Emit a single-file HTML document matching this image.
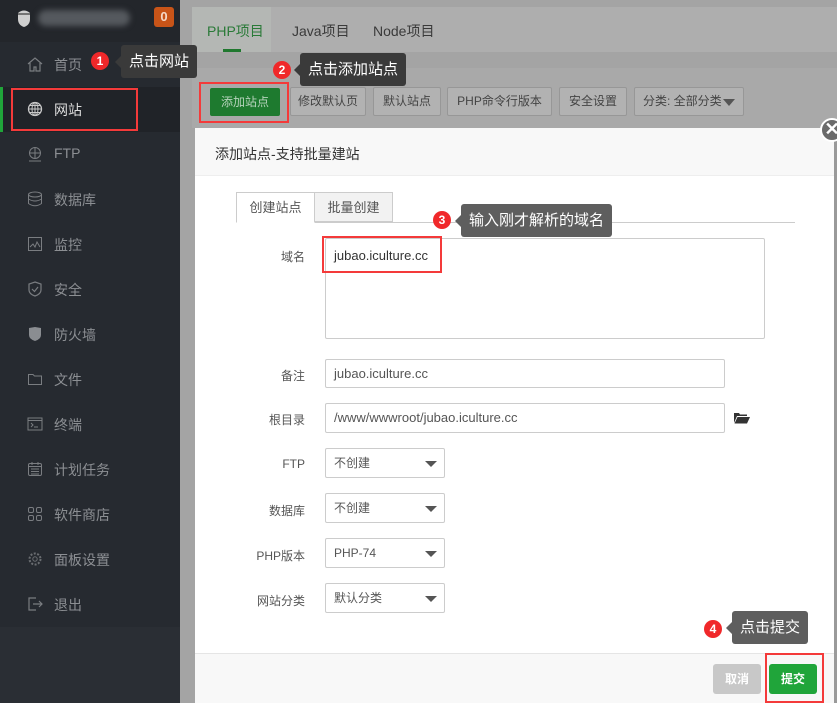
<!DOCTYPE html>
<html><head><meta charset="utf-8">
<style>
*{box-sizing:border-box;margin:0;padding:0}
body{width:837px;height:703px;overflow:hidden;position:relative;background:#a4a4a4;font-family:"Liberation Sans","Noto Sans CJK SC",sans-serif;font-size:13px;color:#333}
.abs{position:absolute}
#side{left:0;top:0;width:180px;height:703px;background:#2a2e34}
#side .top{left:0;top:0;width:180px;height:42px;background:#23262b}
#side .menu{left:0;top:42px;width:180px;height:585px;background:#262a30}
.mi{position:absolute;left:0;width:180px;height:45px;color:#8c8f93;font-size:14px}
.mi span{position:absolute;left:54px;top:13px}
.mi svg{position:absolute;left:27px;top:14px}
.tipc{position:absolute;width:18px;height:18px;border-radius:9px;background:#f0282a;color:#fff;font-size:12px;font-weight:bold;text-align:center;line-height:18px}
.tip{position:absolute;background:#3a3a3a;color:#fff;font-size:15px;border-radius:3px;padding:0 8px;line-height:33px;height:33px;white-space:nowrap}
.tip:before{content:"";position:absolute;left:-6px;top:11px;border:6px solid transparent;border-left:0;border-right-color:#3a3a3a}
.red{position:absolute;border:2px solid #f43a3a}
.btn{position:absolute;top:87px;height:29px;border:1px solid #979797;background:#b2b2b2;border-radius:2px;color:#444;font-size:12px;line-height:27px;text-align:center;white-space:nowrap}
.lbl{position:absolute;width:90px;left:215px;text-align:right;font-size:12px;color:#555}
.inp{position:absolute;left:325px;border:1px solid #ccc;border-radius:2px;background:#fff;font-size:12px;color:#555;padding-left:8px;line-height:27px}
.sel{position:absolute;left:325px;width:120px;height:30px;border:1px solid #ccc;border-radius:2px;background:#fff;font-size:12px;color:#555;padding-left:8px;line-height:28px}
.sel:after{content:"";position:absolute;right:7px;top:12px;border:6px solid transparent;border-top:6px solid #555;border-bottom:0}
</style></head><body>
<div id="side" class="abs">
 <div class="top abs"></div>
 <svg class="abs" style="left:16px;top:8px" width="16" height="20" viewBox="0 0 16 20"><path d="M2 5 Q8 0 14 5 L14 11 Q14 17 8 19 Q2 17 2 11Z" fill="#cfcfcf"/><path d="M2 6 L14 6" stroke="#555" stroke-width="1.5"/></svg>
 <div class="abs" style="left:38px;top:10px;width:92px;height:16px;background:#55595e;border-radius:8px;filter:blur(3px)"></div>
 <div class="abs" style="left:154px;top:7px;width:20px;height:20px;border-radius:3px;background:#c85418;color:#f5d9c8;font-size:13px;font-weight:bold;text-align:center;line-height:20px">0</div>
 <div class="menu abs"></div>
 <div class="mi" style="top:42px"><svg width="16" height="16" viewBox="0 0 16 16"><path d="M1 8 L8 2 L15 8 M3 7 V15 H7 V11 H9 V15 H13 V7" stroke="#7a7d81" fill="none" stroke-width="1.2"/></svg><span>首页</span></div>
 <div class="mi" style="top:87px;background:#202328;border-left:3px solid #20a53a"><svg width="16" height="16" viewBox="0 0 16 16" style="left:24px"><circle cx="8" cy="8" r="6.5" stroke="#c8c8c8" fill="none" stroke-width="1.3"/><path d="M1.5 8H14.5M8 1.5V14.5M3 4.5H13M3 11.5H13" stroke="#c8c8c8" stroke-width="1"/><ellipse cx="8" cy="8" rx="3" ry="6.5" stroke="#c8c8c8" fill="none"/></svg><span style="color:#ddd;left:51px">网站</span></div>
 <div class="mi" style="top:132px"><svg width="16" height="16" viewBox="0 0 16 16"><circle cx="8" cy="7" r="5.5" stroke="#7a7d81" fill="none"/><path d="M2.5 7H13.5M8 1.5V12.5M2 15H14" stroke="#7a7d81"/></svg><span>FTP</span></div>
 <div class="mi" style="top:177px"><svg width="16" height="16" viewBox="0 0 16 16"><ellipse cx="8" cy="3.5" rx="6.5" ry="2.5" stroke="#7a7d81" fill="none"/><path d="M1.5 3.5V12.5Q8 17 14.5 12.5V3.5M1.5 8Q8 12 14.5 8" stroke="#7a7d81" fill="none"/></svg><span>数据库</span></div>
 <div class="mi" style="top:222px"><svg width="16" height="16" viewBox="0 0 16 16"><rect x="1.5" y="1.5" width="13" height="13" stroke="#7a7d81" fill="none"/><path d="M3 11 L6 8 L8 11 L10 6 L13 11" stroke="#7a7d81" fill="none"/></svg><span>监控</span></div>
 <div class="mi" style="top:267px"><svg width="16" height="16" viewBox="0 0 16 16"><path d="M8 1 L14 3 V9 Q14 13 8 15 Q2 13 2 9 V3Z M5 8 L7.5 10.5 L11 6" stroke="#7a7d81" fill="none" stroke-width="1.2"/></svg><span>安全</span></div>
 <div class="mi" style="top:312px"><svg width="16" height="16" viewBox="0 0 16 16"><path d="M2 2 L8 1 L14 2 V9 Q14 13 8 15 Q2 13 2 9Z" fill="#8a8d91"/></svg><span>防火墙</span></div>
 <div class="mi" style="top:357px"><svg width="16" height="16" viewBox="0 0 16 16"><path d="M1.5 3.5H6L7.5 5H14.5V13.5H1.5Z" stroke="#7a7d81" fill="none"/></svg><span>文件</span></div>
 <div class="mi" style="top:402px"><svg width="16" height="16" viewBox="0 0 16 16"><rect x="1" y="2" width="14" height="12" stroke="#7a7d81" fill="none"/><path d="M1 4.5H15M4 7L6 9L4 11M7 11H11" stroke="#7a7d81" fill="none"/></svg><span>终端</span></div>
 <div class="mi" style="top:447px"><svg width="16" height="16" viewBox="0 0 16 16"><rect x="1.5" y="2.5" width="13" height="12" rx="1.5" stroke="#7a7d81" fill="none"/><path d="M1.5 5.5H14.5M5 1V4M11 1V4M4 8H12M4 10.5H12M4 13H12" stroke="#7a7d81"/></svg><span>计划任务</span></div>
 <div class="mi" style="top:492px"><svg width="16" height="16" viewBox="0 0 16 16"><rect x="1.5" y="1.5" width="5" height="5" rx="1.5" stroke="#7a7d81" fill="none"/><rect x="9.5" y="1.5" width="5" height="5" rx="1.5" stroke="#7a7d81" fill="none"/><rect x="1.5" y="9.5" width="5" height="5" rx="1.5" stroke="#7a7d81" fill="none"/><rect x="9.5" y="9.5" width="5" height="5" rx="1.5" stroke="#7a7d81" fill="none"/></svg><span>软件商店</span></div>
 <div class="mi" style="top:537px"><svg width="16" height="16" viewBox="0 0 16 16"><circle cx="8" cy="8" r="5.5" stroke="#6a6d71" fill="none" stroke-width="2" stroke-dasharray="2 1.5"/><circle cx="8" cy="8" r="2.2" stroke="#6a6d71" fill="none"/></svg><span>面板设置</span></div>
 <div class="mi" style="top:582px"><svg width="16" height="16" viewBox="0 0 16 16"><path d="M9 2H2V14H9M6 8H15M12 5L15 8L12 11" stroke="#7a7d81" fill="none" stroke-width="1.2"/></svg><span>退出</span></div>
</div>

<!-- main -->
<div class="abs" style="left:192px;top:7px;width:645px;height:45px;background:#aeaeae"></div>
<div class="abs" style="left:192px;top:7px;width:79px;height:45px;background:#b4b7b4"></div>
<div class="abs" style="left:207px;top:21px;color:#2a7a38;font-size:14px">PHP项目</div>
<div class="abs" style="left:223px;top:49px;width:18px;height:3px;background:#20782f"></div>
<div class="abs" style="left:292px;top:21px;color:#3a3a3a;font-size:14px">Java项目</div>
<div class="abs" style="left:373px;top:21px;color:#3a3a3a;font-size:14px">Node项目</div>
<div class="abs" style="left:192px;top:68px;width:645px;height:60px;background:#a9a9a9"></div>
<div class="btn" style="left:210px;width:70px;top:88px;height:28px;background:#1e7a2f;border-color:#1e7a2f;color:#b6d3bb">添加站点</div>
<div class="btn" style="left:290px;width:76px">修改默认页</div>
<div class="btn" style="left:373px;width:68px">默认站点</div>
<div class="btn" style="left:447px;width:105px">PHP命令行版本</div>
<div class="btn" style="left:559px;width:68px">安全设置</div>
<div class="btn" style="left:634px;width:110px;text-align:left;padding-left:8px">分类: 全部分类<span style="position:absolute;right:8px;top:11px;border:6px solid transparent;border-top:7px solid #555;border-bottom:0"></span></div>
<div class="abs" style="left:834px;top:128px;width:3px;height:575px;background:#9a9a9a"></div>

<!-- modal -->
<div class="abs" style="left:195px;top:128px;width:639px;height:575px;background:#fff"></div>
<div class="abs" style="left:195px;top:128px;width:639px;height:48px;background:#f8f8f8;border-bottom:1px solid #eee"></div>
<div class="abs" style="left:215px;top:144px;font-size:14px;color:#333">添加站点-支持批量建站</div>
<div class="abs" style="left:820px;top:118px;width:24px;height:24px;border-radius:12px;background:#6b6b6b;border:2px solid #fff;color:#fff;font-size:18px;line-height:19px;text-align:center;font-weight:bold">✕</div>

<div class="abs" style="left:236px;top:222px;width:559px;height:1px;background:#ccc"></div>
<div class="abs" style="left:236px;top:192px;width:79px;height:31px;border:1px solid #ccc;border-bottom:1px solid #fff;background:#fff;font-size:13px;color:#555;text-align:center;line-height:29px">创建站点</div>
<div class="abs" style="left:315px;top:192px;width:78px;height:30px;border:1px solid #ccc;border-left:0;background:#f2f2f2;font-size:13px;color:#555;text-align:center;line-height:29px">批量创建</div>

<div class="lbl" style="top:248px">域名</div>
<div class="inp" style="top:238px;width:440px;height:101px;line-height:16px;padding-top:9px;color:#333;font-size:13px">jubao.iculture.cc</div>
<div class="lbl" style="top:367px">备注</div>
<div class="inp" style="top:359px;width:400px;height:29px;line-height:27px;font-size:13px">jubao.iculture.cc</div>
<div class="lbl" style="top:411px">根目录</div>
<div class="inp" style="top:403px;width:400px;height:30px;font-size:13px">/www/wwwroot/jubao.iculture.cc</div>
<svg class="abs" style="left:734px;top:412px" width="16" height="12" viewBox="0 0 16 12"><path d="M0 1H5L6 2.5H13V4H3L0 11Z M3.5 5H16L13 11.5H0.5Z" fill="#333"/></svg>
<div class="lbl" style="top:457px">FTP</div><div class="sel" style="top:448px">不创建</div>
<div class="lbl" style="top:502px">数据库</div><div class="sel" style="top:493px">不创建</div>
<div class="lbl" style="top:547px">PHP版本</div><div class="sel" style="top:538px">PHP-74</div>
<div class="lbl" style="top:592px">网站分类</div><div class="sel" style="top:583px">默认分类</div>

<div class="abs" style="left:195px;top:653px;width:639px;height:50px;background:#f8f8f8;border-top:1px solid #e5e5e5"></div>
<div class="abs" style="left:713px;top:664px;width:48px;height:30px;background:#c8c8c8;border-radius:3px;color:#fff;font-size:12px;font-weight:bold;text-align:center;line-height:30px">取消</div>
<div class="abs" style="left:769px;top:664px;width:48px;height:30px;background:#20a53a;border-radius:3px;color:#fff;font-size:12px;font-weight:bold;text-align:center;line-height:30px">提交</div>

<!-- annotations -->
<div class="red" style="left:11px;top:88px;width:127px;height:43px"></div>
<div class="red" style="left:199px;top:82px;width:90px;height:41px"></div>
<div class="red" style="left:322px;top:236px;width:120px;height:37px"></div>
<div class="red" style="left:765px;top:653px;width:59px;height:50px"></div>

<div class="tipc" style="left:91px;top:52px">1</div>
<div class="tip" style="left:121px;top:45px">点击网站</div>
<div class="tipc" style="left:273px;top:61px">2</div>
<div class="tip" style="left:300px;top:53px">点击添加站点</div>
<div class="tipc" style="left:433px;top:211px">3</div>
<div class="tip" style="left:461px;top:204px;background:#5e5e5e">输入刚才解析的域名</div>
<div class="tipc" style="left:704px;top:620px">4</div>
<div class="tip" style="left:732px;top:611px;background:#5e5e5e">点击提交</div>
<style>.tip[style*="5e5e5e"]:before{border-right-color:#5e5e5e}</style>
</body></html>
